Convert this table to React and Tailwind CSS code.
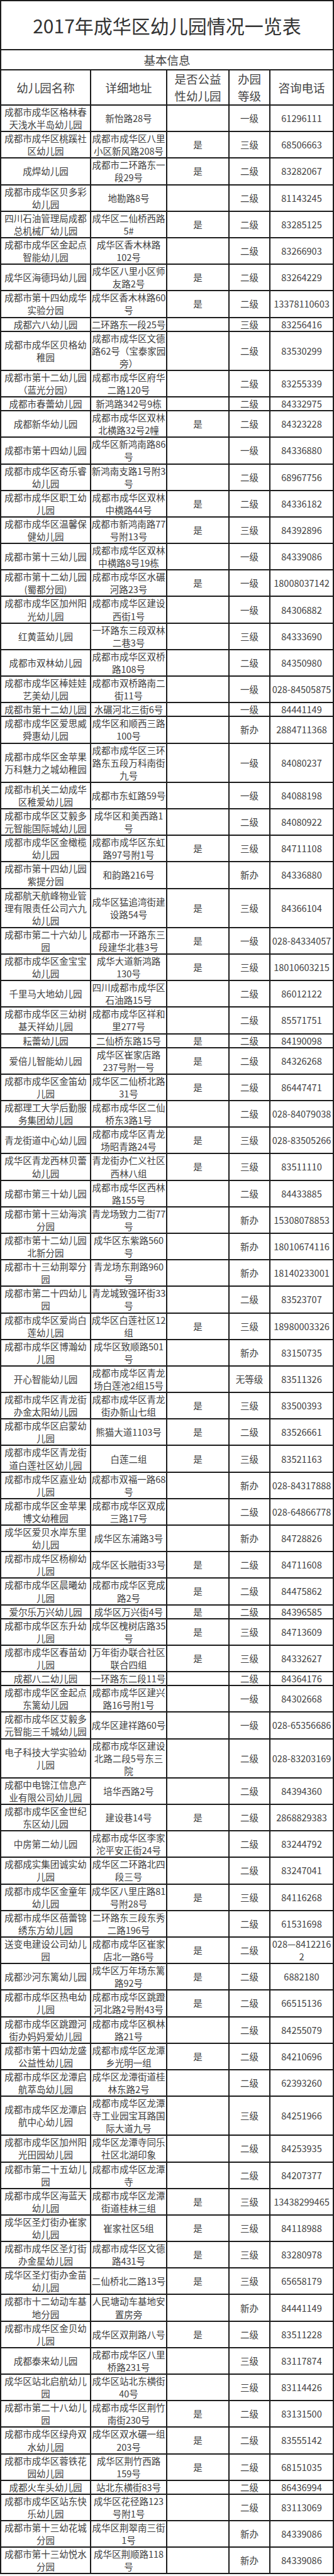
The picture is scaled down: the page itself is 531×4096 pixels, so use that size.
import React from 'react';

// cells split by "|", lines inside a cell split by "/"
const rows = [
  '成都市成华区格林春/天浅水半岛幼儿园|新怡路28号||一级|61296111',
  '成都市成华区桃蹊社/区幼儿园|成都市成华区八里/小区新风路208号|是|三级|68506663',
  '成焊幼儿园|成都市二环路东一/段29号|是|二级|83282067',
  '成都市成华区贝多彩/幼儿园|地勘路8号||二级|81143245',
  '四川石油管理局成都/总机械厂幼儿园|成华区二仙桥西路/5#|是|二级|83285125',
  '成都市成华区金起点/智能幼儿园|成华区香木林路/102号||二级|83266903',
  '成华区海德玛幼儿园|成华区八里小区师/友路2号|是|二级|83264229',
  '成都市第十四幼成华/实验分园|成华区香木林路60/号|是|二级|13378110603',
  '成都六八幼儿园|二环路东一段25号||三级|83256416',
  '成都市成华区贝格幼/稚园|成都市成华区文德/路62号（宝泰家园/旁）||二级|83530299',
  '成都市第十二幼儿园/（蓝光分园）|成都市成华区府华/二路120号||二级|83255339',
  '成都市春蕾幼儿园|新鸿路342号9栋||二级|84332975',
  '成都新华幼儿园|成都市成华区双林/北横路32号2幢|是|二级|84323228',
  '成都市第十四幼儿园|成华区新鸿南路86/号||一级|84336880',
  '成都市成华区奇乐睿/幼儿园|新鸿南支路1号附3/号||二级|68967756',
  '成都市成华区职工幼/儿园|成都市成华区双林/中横路44号|是|二级|84336182',
  '成都市成华区温馨保/健幼儿园|成都市新鸿南路77/号附13号|是|三级|84392896',
  '成都市第十三幼儿园|成都市成华区双林/中横路8号19栋||一级|84339086',
  '成都市第十二幼儿园/(蜀都分园)|成都市成华区水碾/河路23号|是|一级|18008037142',
  '成都市成华区加州阳/光幼儿园|成都市成华区建设/西街1号||一级|84306882',
  '红黄蓝幼儿园|一环路东三段双林/二巷3号||三级|84333690',
  '成都市双林幼儿园|成都市成华区双桥/路108号||二级|84350980',
  '成都市成华区棒娃娃/艺美幼儿园|成都市双桥路南二/街11号||一级|028-84505875',
  '成都市第十二幼儿园|水碾河北三街6号||一级|84441149',
  '成都市成华区爱思威/舜惠幼儿园|成华区和顺西三路/100号||新办|2884711368',
  '成都市成华区金苹果/万科魅力之城幼稚园|成都市成华区三环/路东五段万科南街/九号||一级|84080237',
  '成都市机关二幼成华/区稚爱幼儿园|成都市东虹路59号||一级|84088198',
  '成都市成华区艾毅多/元智能国际城幼儿园|成华区和美西路1/号||二级|84080922',
  '成都市成华区金橄榄/幼儿园|成都市成华区东虹/路97号附1号|是|三级|84711108',
  '成都市第十四幼儿园/紫提分园|和韵路216号||新办|84336880',
  '成都航天航峰物业管/理有限责任公司六九/幼儿园|成华区猛追湾街建/设路54号|是|三级|84366104',
  '成都市第二十六幼儿/园|成都市一环路东三/段建华北巷3号|是|一级|028-84334057',
  '成都市成华区金宝宝/幼儿园|成华大道新鸿路/130号|是|三级|18010603215',
  '千里马大地幼儿园|四川成都市成华区/石油路15号||二级|86012122',
  '成都市成华区三幼树/基天祥幼儿园|成都市成华区祥和/里277号||二级|85571751',
  '耘蕾幼儿园|二仙桥东路15号|是|二级|84190098',
  '爱倍儿智能幼儿园|成华区崔家店路/237号附一号|是|二级|84326268',
  '成都市成华区金笛幼/儿园|成华区二仙桥北路/31号|是|二级|86447471',
  '成都理工大学后勤服/务集团幼儿园|成都市成华区二仙/桥东3路1号||二级|028-84079038',
  '青龙街道中心幼儿园|成都市成华区青龙/场昭青路24号|是|三级|028-83505266',
  '成华区青龙西林贝蕾/幼儿园|青龙街办仁义社区/西林八组|是|三级|83511110',
  '成都市第三十幼儿园|成都市成华区西林/路155号||二级|84433885',
  '成都市第十三幼海滨/分园|青龙场致力二街77/号||新办|15308078853',
  '成都市第十二幼儿园/北新分园|成华区东紫路560/号||新办|18010674116',
  '成都市十三幼荆翠分/园|青龙场东荆路960/号||新办|18140233001',
  '成都市第二十四幼儿/园|青龙城致强环街33/号||二级|83523707',
  '成都市成华区爱尚白/莲幼儿园|成华区白莲社区12/组|是|三级|18980003326',
  '成都市成华区博瀚幼/儿园|成华区致顺路501/号||新办|83150735',
  '开心智能幼儿园|成都市成华区青龙/场白莲池2组15号||无等级|83511326',
  '成都市成华区青龙街/办金太阳幼儿园|成都市成华区青龙/街办新山七组|是|三级|83500393',
  '成都市成华区启蒙幼/儿园|熊猫大道1103号|是|二级|83526661',
  '成都市成华区青龙街/道白莲社区幼儿园|白莲二组|是|三级|83521163',
  '成都市成华区嘉业幼/儿园|成都市双福一路68/号||新办|028-84317888',
  '成都市成华区金苹果/博文幼稚园|成都市成华区双成/三路17号||二级|028-64866778',
  '成华区爱贝水岸东里/幼儿园|成华区东浦路3号||新办|84728826',
  '成都市成华区杨柳幼/儿园|成华区长融街33号|是|二级|84711608',
  '成都市成华区晨曦幼/儿园|成都市成华区竞成/路2号|是|二级|84475862',
  '爱尔乐万兴幼儿园|成华区万兴街4号|是|二级|84396585',
  '成都市成华区东升幼/儿园|成华区槐树店路35/号|是|三级|84713609',
  '成都市成华区春苗幼/儿园|万年街办联合社区/联合四组|是|三级|84332627',
  '成都八二幼儿园|一环路东二段11号||二级|84364176',
  '成都市成华区金起点/东篱幼儿园|成都市成华区建兴/路16号附1号||一级|84302668',
  '成都市成华区艾毅多/元智能三千城幼儿园|成华区建祥路60号||一级|028-65356686',
  '电子科技大学实验幼/儿园|成都市成华区建设/北路二段5号东三/院||二级|028-83203169',
  '成都中电锦江信息产/业有限公司幼儿园|培华西路2号||二级|84394360',
  '成都市成华区金世纪/东区幼儿园|建设巷14号|是|二级|2868829383',
  '中房第二幼儿园|成都市成华区李家/沱平安正街24号||二级|83244792',
  '成都成实集团诚实幼/儿园|成华区二环路北四/段三号||二级|83247041',
  '成都市成华区金童年/幼儿园|成华区八里庄路81/号附28号|是|三级|84116268',
  '成都市成华区蓓蕾锦/绣东方幼儿园|二环路东三段东秀/二路196号||二级|61531698',
  '送变电建设公司幼儿/园|成都市成华区崔家/店北一路6号|是|二级|028—8412216/2',
  '成都沙河东篱幼儿园|成华区万年场东篱/路92号|是|二级|6882180',
  '成都市成华区热电幼/儿园|成都市成华区跳蹬/河北路2号附43号|是|二级|66515136',
  '成都市成华区跳蹬河/街办妈妈爱幼儿园|成都市成华区枫林/路21号||二级|84255079',
  '成都市第十四幼龙盛/公益性幼儿园|成都市成华区龙潭/乡光明一组|是|二级|84210696',
  '成都市成华区龙潭启/航萃岛幼儿园|成华区龙潭街道桂/林东路2号||二级|62393260',
  '成都市成华区龙潭启/航中心幼儿园|成都市成华区龙潭/寺工业园宝耳路国/际大道九号||三级|84251966',
  '成都市成华区加州阳/光田园幼儿园|成华区龙潭寺同乐/社区北湖印象||二级|84253935',
  '成都市第二十五幼儿/园|成都市成华区龙潭/寺||二级|84207377',
  '成都市成华区海蓝天/幼儿园|成都市成华区龙潭/街道桂林三组|是|三级|13438299465',
  '成华区圣灯街办崔家/幼儿园|崔家社区5组|是|三级|84118988',
  '成都市成华区圣灯街/办金星幼儿园|成都市成华区文德/路431号|是|三级|83280978',
  '成华区圣灯街办金苗/幼儿园|二仙桥北二路13号|是|三级|65658179',
  '成都市十二幼动车基/地分园|人民塘动车基地安/置房旁||新办|84441149',
  '成都市成华区金贝幼/儿园|成华区双荆路八号|是|二级|83511228',
  '成都泰来幼儿园|成都市成华区八里/桥路231号||三级|83117874',
  '成华区站北启航幼儿/园|成华区站北东横街/40号||三级|83114426',
  '成都市第二十八幼儿/园|成都市成华区荆竹/南街230号|是|二级|83131500',
  '成都市成华区绿舟双/水幼儿园|成华区双水碾一组/203号|是|二级|83555142',
  '成都市成华区蓉铁花/园幼儿园|成华区荆竹西路/159号|是|二级|68151035',
  '成都火车头幼儿园|站北东横街83号||二级|86436994',
  '成都市成华区站东快/乐幼儿园|成华区花径路123/号附1号||二级|83113069',
  '成都市第十三幼花城/分园|成华区荆翠南三街/1号||新办|84339086',
  '成都市第十三幼悦水/分园|成华区荆顺路118/号||新办|84339086',
];

function Lines({ text }) {
  const parts = text.split('/');
  return parts.map((p, i) => (
    <React.Fragment key={i}>
      {p}
      {i < parts.length - 1 && <br />}
    </React.Fragment>
  ));
}

export default function App() {
  return (
    <div className="w-[531px] bg-white font-['Noto_Sans_CJK_SC','Noto_Sans',sans-serif] text-[#404040]">
      <table className="w-[529px] table-fixed border-collapse">
        <colgroup>
          <col className="w-[143px]" />
          <col className="w-[121px]" />
          <col className="w-[99px]" />
          <col className="w-[65px]" />
          <col className="w-[101px]" />
        </colgroup>
        <tbody>
          <tr>
            <td colSpan={5} className="h-[78px] border-2 border-[#1c1c1c] text-center align-middle text-[30px] leading-none text-[#333]">
              2017年成华区幼儿园情况一览表
            </td>
          </tr>
          <tr>
            <td colSpan={5} className="h-[32px] border-2 border-[#1c1c1c] text-center align-middle text-[18.5px] leading-none text-[#444]">
              基本信息
            </td>
          </tr>
          <tr className="text-[18.5px] leading-[27px] text-[#444]">
            <td className="h-[55px] border-2 border-[#1c1c1c] text-center align-middle">幼儿园名称</td>
            <td className="border-2 border-[#1c1c1c] text-center align-middle">详细地址</td>
            <td className="border-2 border-[#1c1c1c] text-center align-middle">是否公益<br />性幼儿园</td>
            <td className="border-2 border-[#1c1c1c] text-center align-middle">办园<br />等级</td>
            <td className="border-2 border-[#1c1c1c] text-center align-middle">咨询电话</td>
          </tr>
          {rows.map((r, i) => {
            const cells = r.split('|');
            return (
              <tr key={i} className="text-[14.5px] leading-[20.1px]">
                {cells.map((c, j) => (
                  <td key={j} className="border-2 border-[#1c1c1c] p-0 text-center align-middle whitespace-nowrap">
                    <Lines text={c} />
                  </td>
                ))}
              </tr>
            );
          })}
        </tbody>
      </table>
    </div>
  );
}
